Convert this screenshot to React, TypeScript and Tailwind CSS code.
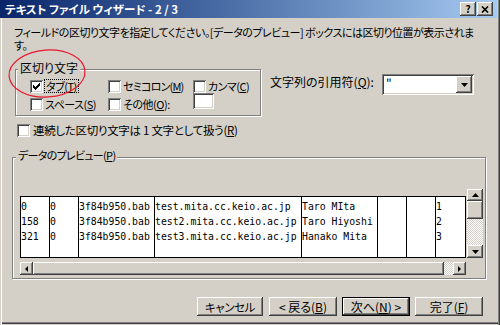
import type { ReactNode } from "react"

const raised =
  "bg-[#d4d0c8] shadow-[inset_-1px_-1px_#404040,inset_1px_1px_#fff,inset_-2px_-2px_#808080,inset_2px_2px_#d4d0c8]"
const sunken =
  "shadow-[inset_1px_1px_#808080,inset_-1px_-1px_#fff,inset_2px_2px_#404040,inset_-2px_-2px_#d4d0c8]"
const etched = "border border-[#808080] shadow-[inset_1px_1px_#fff,1px_1px_#fff]"
const dither =
  "[background-image:repeating-conic-gradient(#fff_0_25%,#d4d0c8_0_50%)] [background-size:2px_2px]"
// kana-heavy labels run narrower in the original UI font
const kana = "text-[11px] tracking-[-0.5px]"

const rows = [
  ["0", "0", "3f84b950.bab", "test.mita.cc.keio.ac.jp", "Taro MIta", "", "", "1"],
  ["158", "0", "3f84b950.bab", "test2.mita.cc.keio.ac.jp", "Taro Hiyoshi", "", "", "2"],
  ["321", "0", "3f84b950.bab", "test3.mita.cc.keio.ac.jp", "Hanako Mita", "", "", "3"],
]
const colWidths = ["w-[29px]", "w-[29px]", "w-[76px]", "w-[147px]", "w-[76px]", "w-[29px]", "w-[29px]", "w-[30px]"]

function U({ children }: { children: ReactNode }) {
  return <span className="underline underline-offset-[1px]">{children}</span>
}

function Check({ checked }: { checked?: boolean }) {
  return (
    <span className={`inline-flex size-[13px] shrink-0 items-center justify-center bg-white ${sunken}`}>
      {checked ? (
        <svg width="7" height="7" viewBox="0 0 7 7" shapeRendering="crispEdges">
          <polygon points="0,2 2,4 7,-1 7,2 2,7 0,5" fill="#000" />
        </svg>
      ) : null}
    </span>
  )
}

function Arrow({ dir }: { dir: "up" | "down" | "left" | "right" }) {
  const pts = {
    up: "0,4 3.5,0 7,4",
    down: "0,0 7,0 3.5,4",
    left: "3,0 3,6 0,3",
    right: "0,0 0,6 3,3",
  }[dir]
  const w = dir === "up" || dir === "down" ? 7 : 3
  const h = dir === "up" || dir === "down" ? 4 : 6
  return (
    <svg width={w} height={h} viewBox={`0 0 ${w} ${h}`}>
      <polygon points={pts} fill="#000" />
    </svg>
  )
}

function Button({ children, primary, w }: { children: ReactNode; primary?: boolean; w: string }) {
  return (
    <div
      className={`flex h-[19px] items-center justify-center ${w} ${
        primary
          ? "border border-black bg-[#d4d0c8] shadow-[inset_-1px_-1px_#404040,inset_1px_1px_#fff,inset_-2px_-2px_#808080]"
          : raised
      }`}
    >
      {children}
    </div>
  )
}

export default function App() {
  return (
    <div className="relative flex h-[325px] w-[500px] flex-col overflow-hidden bg-[#d4d0c8] font-['Noto_Sans_CJK_JP',sans-serif] text-[12px] leading-[12px] whitespace-nowrap text-black [font-feature-settings:'palt'] shadow-[inset_1px_0_#d4d0c8,inset_2px_0_#fff,inset_-1px_0_#404040,inset_-2px_0_#808080,inset_0_-1px_#d4d0c8,inset_0_-2px_#404040,inset_0_-3px_#808080]">
      {/* title bar */}
      <div className="flex h-[18px] w-[497px] shrink-0 items-center bg-linear-to-r from-[#0a246a] to-[#a6caf0] pr-[4px] pl-[5px]">
        <span className="text-[11.5px] font-bold text-white">テキスト ファイル ウィザード - 2 / 3</span>
        <div className="ml-auto flex">
          <div className={`flex h-[14px] w-[16px] items-center justify-center text-[10px] font-bold ${raised}`}>?</div>
          <div className={`ml-[1px] flex h-[14px] w-[16px] items-center justify-center ${raised}`}>
            <svg width="8" height="7" viewBox="0 0 8 7">
              <path d="M1 0.5 7 6.5M7 0.5 1 6.5" stroke="#000" strokeWidth="1.6" />
            </svg>
          </div>
        </div>
      </div>

      <p className={`mt-[8px] ml-[14px] leading-[13px] ${kana}`}>
        フィールドの区切り文字を指定してください。[データのプレビュー] ボックスには区切り位置が表示されま
        <br />
        す。
      </p>

      {/* delimiters + quote */}
      <div className="mt-[17px] flex items-start">
        <div className={`relative ml-[15px] h-[47px] w-[246px] pt-[9px] pl-[14px] ${etched}`}>
          <span className="absolute top-[-8px] left-[2px] bg-[#d4d0c8] px-[2px]">区切り文字</span>
          <div className={`flex h-[14px] items-center ${kana}`}>
            <div className="flex w-[78px] items-center">
              <Check checked />
              <span className="ml-[1px] border border-dotted border-black px-[1px] leading-[12px]">
                タブ(<U>T</U>)
              </span>
            </div>
            <div className="flex w-[85px] items-center">
              <Check />
              <span className="ml-[2px] tracking-[-0.8px]">
                セミコロン(<U>M</U>)
              </span>
            </div>
            <div className="flex items-center">
              <Check />
              <span className="ml-[2px]">
                カンマ(<U>C</U>)
              </span>
            </div>
          </div>
          <div className={`mt-[4px] flex h-[14px] items-center ${kana}`}>
            <div className="flex w-[78px] items-center">
              <Check />
              <span className="ml-[2px]">
                スペース(<U>S</U>)
              </span>
            </div>
            <div className="flex w-[85px] items-center">
              <Check />
              <span className="ml-[2px]">
                その他(<U>O</U>):
              </span>
            </div>
            <div className={`-mt-[6px] h-[16px] w-[21px] bg-white ${sunken}`} />
          </div>
        </div>
        <span className="mt-[7px] ml-[9px] w-[112px]">
          文字列の引用符(<U>Q</U>):
        </span>
        <div className={`mt-[5px] flex h-[21px] w-[92px] items-start bg-white p-[2px] ${sunken}`}>
          <span className="mt-[1px] ml-[2px] flex-1">"</span>
          <div className={`flex h-[17px] w-[16px] items-center justify-center ${raised}`}>
            <Arrow dir="down" />
          </div>
        </div>
      </div>

      <div className="mt-[7px] ml-[17px] flex h-[14px] items-center">
        <Check />
        <span className="ml-[3px] text-[11.5px] tracking-[-0.3px]">
          連続した区切り文字は 1 文字として扱う(<U>R</U>)
        </span>
      </div>

      {/* preview */}
      <div className={`relative mt-[20px] ml-[12px] h-[122px] w-[474px] pt-[31px] pl-[7px] ${etched}`}>
        <span className="absolute top-[-9px] left-[3px] bg-[#d4d0c8] px-[2px] text-[11px] tracking-[-0.7px]">
          データのプレビュー(<U>P</U>)
        </span>
        <div className="flex">
          <div className="w-[446px] pt-[7px]">
            <div className="flex h-[62px] border border-black bg-white font-['DejaVu_Sans_Mono',monospace] text-[9.8px] leading-[15px] [font-feature-settings:normal]">
              {colWidths.map((w, c) => (
                <div key={c} className={`${w} shrink-0 overflow-hidden border-r border-black pt-[2px] last:border-r-0`}>
                  {rows.map((r, i) => (
                    <div key={i} className="h-[15px]">
                      {r[c]}
                    </div>
                  ))}
                </div>
              ))}
            </div>
            <div className="mt-[4px] flex h-[13px]">
              <div className={`flex w-[13px] items-center justify-center ${raised}`}>
                <Arrow dir="left" />
              </div>
              <div className={`w-[411px] ${raised}`} />
              <div className={`w-[9px] ${dither}`} />
              <div className={`flex w-[13px] items-center justify-center ${raised}`}>
                <Arrow dir="right" />
              </div>
            </div>
          </div>
          <div className="ml-[1px] flex h-[69px] w-[16px] flex-col">
            <div className={`flex h-[12px] items-center justify-center ${raised}`}>
              <Arrow dir="up" />
            </div>
            <div className={`h-[18px] ${raised}`} />
            <div className={`h-[26px] ${dither}`} />
            <div className={`flex h-[13px] items-center justify-center ${raised}`}>
              <Arrow dir="down" />
            </div>
          </div>
        </div>
      </div>

      {/* buttons */}
      <div className="mt-[18px] flex justify-end pr-[17px]">
        <Button w="w-[66px]">
          <span className="text-[11.5px] tracking-[-0.4px]">キャンセル</span>
        </Button>
        <div className="ml-[6px]">
          <Button w="w-[68px]">
            {"< 戻る("}
            <U>B</U>)
          </Button>
        </div>
        <div className="ml-[5px]">
          <Button w="w-[68px]" primary>
            次へ(<U>N</U>
            {") >"}
          </Button>
        </div>
        <div className="ml-[5px]">
          <Button w="w-[68px]">
            完了(<U>F</U>)
          </Button>
        </div>
      </div>

      {/* red hand-drawn circle */}
      <svg className="pointer-events-none absolute top-0 left-0" width="500" height="325">
        <ellipse cx="47" cy="73.5" rx="38" ry="23.5" fill="none" stroke="#e8182c" strokeWidth="1.2" transform="rotate(-4 47 73.5)" />
      </svg>
    </div>
  )
}
